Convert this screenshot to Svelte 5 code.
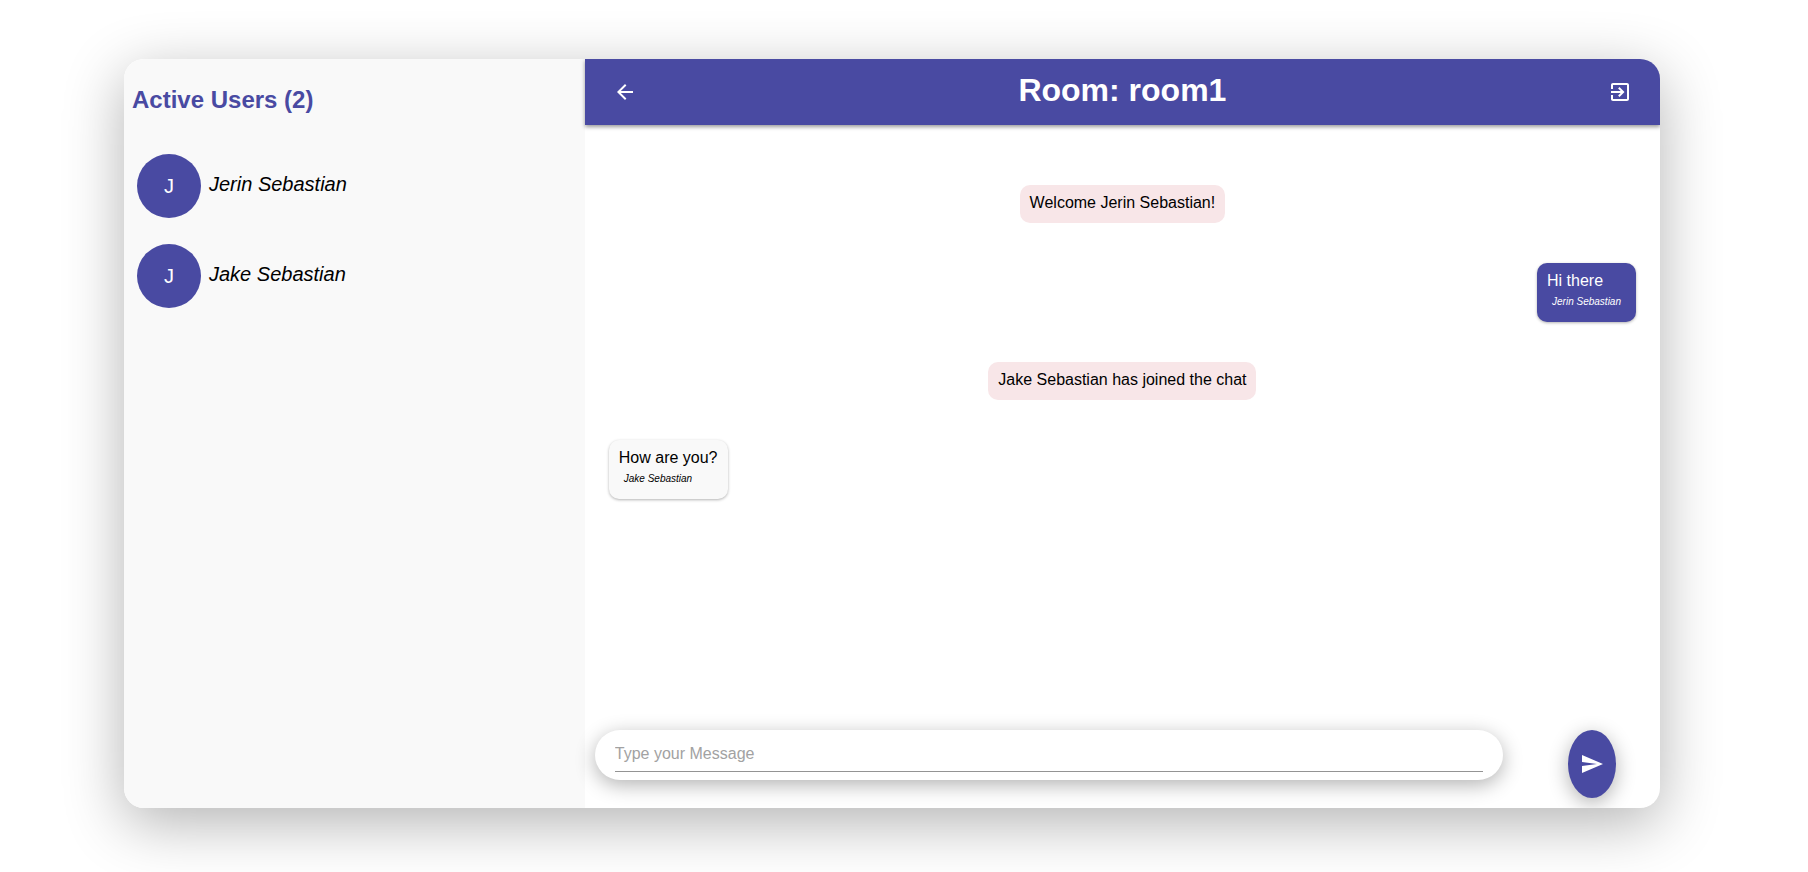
<script>
  const room = 'room1';
  const me = 'Jerin Sebastian';
  const users = ['Jerin Sebastian', 'Jake Sebastian'];
  const messages = [
    { kind: 'notice', text: 'Welcome Jerin Sebastian!' },
    { kind: 'chat', from: 'Jerin Sebastian', text: 'Hi there' },
    { kind: 'notice', text: 'Jake Sebastian has joined the chat' },
    { kind: 'chat', from: 'Jake Sebastian', text: 'How are you?' },
  ];
  let draft = $state('');
</script>

<main class="page">
  <div class="card">
    <aside class="sidebar">
      <h2>Active Users ({users.length})</h2>
      <ul class="users">
        {#each users as user}
          <li>
            <span class="avatar">{user[0]}</span>
            <span class="name">{user}</span>
          </li>
        {/each}
      </ul>
    </aside>

    <section class="chat">
      <header>
        <button class="icon-button" type="button" aria-label="Back">
          <svg viewBox="0 0 24 24"><path d="M20 11H7.83l5.59-5.59L12 4l-8 8 8 8 1.41-1.41L7.83 13H20v-2z" /></svg>
        </button>
        <h1>Room: {room}</h1>
        <button class="icon-button" type="button" aria-label="Leave room">
          <svg viewBox="0 0 24 24"><path d="M10.09 15.59L11.5 17l5-5-5-5-1.41 1.41L12.67 11H3v2h9.67l-2.58 2.59zM19 3H5c-1.11 0-2 .9-2 2v4h2V5h14v14H5v-4H3v4c0 1.1.89 2 2 2h14c1.1 0 2-.9 2-2V5c0-1.1-.9-2-2-2z" /></svg>
        </button>
      </header>

      <div class="messages">
        {#each messages as message}
          {#if message.kind === 'notice'}
            <p class="bubble notice">{message.text}</p>
          {:else}
            <div class="bubble" class:mine={message.from === me} class:theirs={message.from !== me}>
              <p>{message.text}</p>
              <p class="sender">{message.from}</p>
            </div>
          {/if}
        {/each}
      </div>

      <form class="composer" onsubmit={(e) => e.preventDefault()}>
        <div class="field">
          <input type="text" placeholder="Type your Message" aria-label="Type your Message" bind:value={draft} />
        </div>
        <button class="send" type="submit" aria-label="Send">
          <svg viewBox="0 0 24 24"><path d="M2.01 21L23 12 2.01 3 2 10l15 2-15 2z" /></svg>
        </button>
      </form>
    </section>
  </div>
</main>

<style>
  :global(body) {
    margin: 0;
    background: #fff;
  }
  .page {
    --brand: #494aa2;
    box-sizing: border-box;
    min-height: 100vh;
    padding: 59px 148px 64px 124px;
    display: flex;
    font-family: "Liberation Sans", Arial, sans-serif;
    font-size: 16px;
    line-height: 18px;
    color: #000;
  }
  h1, h2, p, ul {
    margin: 0;
    padding: 0;
  }
  .card {
    flex: 1;
    display: grid;
    grid-template-columns: 3fr 7fr;
    border-radius: 20px;
    overflow: hidden;
    background: #fff;
    box-shadow: 0 15px 60px rgba(0, 0, 0, 0.3);
  }
  .sidebar {
    padding: 27px 8px;
    background: #f9f9f9;
  }
  h2 {
    font-size: 24px;
    line-height: 27px;
    color: var(--brand);
  }
  .users {
    list-style: none;
    margin-top: 41px;
    padding-left: 5px;
    display: grid;
    gap: 26px;
  }
  li {
    display: flex;
    align-items: center;
    gap: 8px;
    font-size: 20px;
    line-height: 24px;
  }
  .avatar {
    width: 64px;
    height: 64px;
    border-radius: 50%;
    display: grid;
    place-items: center;
    background: var(--brand);
    color: #fff;
  }
  .name {
    font-style: italic;
    padding-bottom: 4px;
  }
  .chat {
    display: flex;
    flex-direction: column;
    min-width: 0;
  }
  header {
    display: flex;
    align-items: center;
    justify-content: space-between;
    padding: 9px 16px;
    background: var(--brand);
    color: #fff;
    box-shadow: 0 2px 4px rgba(0, 0, 0, 0.4);
  }
  h1 {
    font-size: 32px;
    line-height: 36px;
    padding-bottom: 4px;
  }
  button {
    border: 0;
    padding: 12px;
    background: transparent;
    color: #fff;
    cursor: pointer;
  }
  svg {
    display: block;
    width: 24px;
    height: 24px;
    fill: currentColor;
  }
  .messages {
    flex: 1;
    display: flex;
    flex-direction: column;
    align-items: flex-start;
    gap: 40px;
    padding: 60px 24px 20px;
  }
  .bubble {
    padding: 9px 10px 11px;
    border-radius: 10px;
  }
  .notice {
    align-self: center;
    background: #f8e6e8;
  }
  .mine {
    align-self: flex-end;
    background: var(--brand);
    color: #fff;
    box-shadow: 0 1px 3px rgba(0, 0, 0, 0.3);
  }
  .theirs {
    background: #f9f9f9;
    box-shadow: 0 1px 3px rgba(0, 0, 0, 0.3);
  }
  .sender {
    margin: 6px 5px 4px;
    font-size: 10px;
    line-height: 11px;
    font-style: italic;
  }
  .composer {
    display: flex;
    align-items: flex-start;
    justify-content: space-between;
    gap: 65px;
    padding: 0 44px 10px 10px;
  }
  .field {
    flex: 1;
    box-sizing: border-box;
    height: 50px;
    padding: 8px 20px;
    border-radius: 25px;
    background: #fff;
    box-shadow: 0 5px 20px rgba(0, 0, 0, 0.3);
  }
  input {
    box-sizing: border-box;
    width: 100%;
    height: 34px;
    padding: 0 0 1px;
    border: 0;
    border-bottom: 1px solid #949494;
    outline: 0;
    background: transparent;
    font: inherit;
  }
  input::placeholder {
    color: #a2a2a2;
    opacity: 1;
  }
  .send {
    width: 48px;
    height: 68px;
    border-radius: 50%;
    background: var(--brand);
    box-shadow: 0 5px 20px rgba(0, 0, 0, 0.3);
  }
</style>
